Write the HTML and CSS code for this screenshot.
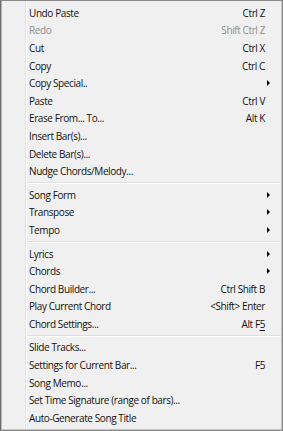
FILE: index.html
```html
<!DOCTYPE html>
<html lang="en">
<head>
    <meta charset="UTF-8">
    <meta name="viewport" content="width=device-width, initial-scale=1.0">
    <title>Edit Menu</title>
    <link rel="stylesheet" href="styles.css">
</head>
<body>
    <div class="menu">
        <div class="menu-item"><span class="label">Undo Paste</span><span class="key">Ctrl Z</span></div>
        <div class="menu-item disabled"><span class="label">Redo</span><span class="key">Shift Ctrl Z</span></div>
        <div class="menu-item"><span class="label">Cut</span><span class="key">Ctrl X</span></div>
        <div class="menu-item"><span class="label">Copy</span><span class="key">Ctrl C</span></div>
        <div class="menu-item"><span class="label">Copy Special..</span><span class="arrow"></span></div>
        <div class="menu-item"><span class="label">Paste</span><span class="key">Ctrl V</span></div>
        <div class="menu-item"><span class="label">Erase From... To...</span><span class="key">Alt K</span></div>
        <div class="menu-item"><span class="label">Insert Bar(s)...</span></div>
        <div class="menu-item"><span class="label">Delete Bar(s)...</span></div>
        <div class="menu-item"><span class="label">Nudge Chords/Melody...</span></div>

        <div class="menu-sep"></div>

        <div class="menu-item"><span class="label">Song Form</span><span class="arrow"></span></div>
        <div class="menu-item"><span class="label">Transpose</span><span class="arrow"></span></div>
        <div class="menu-item"><span class="label">Tempo</span><span class="arrow"></span></div>

        <div class="menu-sep"></div>

        <div class="menu-item"><span class="label">Lyrics</span><span class="arrow"></span></div>
        <div class="menu-item"><span class="label">Chords</span><span class="arrow"></span></div>
        <div class="menu-item"><span class="label">Chord Builder...</span><span class="key">Ctrl Shift B</span></div>
        <div class="menu-item"><span class="label">Play Current Chord</span><span class="key">&lt;Shift&gt; Enter</span></div>
        <div class="menu-item"><span class="label">Chord Settings...</span><span class="key">Alt F<u>5</u></span></div>

        <div class="menu-sep"></div>

        <div class="menu-item"><span class="label">Slide Tracks...</span></div>
        <div class="menu-item"><span class="label">Settings for Current Bar...</span><span class="key">F5</span></div>
        <div class="menu-item"><span class="label">Song Memo...</span></div>
        <div class="menu-item"><span class="label">Set Time Signature (range of bars)...</span></div>
        <div class="menu-item"><span class="label">Auto-Generate Song Title</span></div>
    </div>
</body>
</html>
```

FILE: styles.css
```css
html, body {
    margin: 0;
    padding: 0;
    background-color: #fff;
}

.menu {
    box-sizing: border-box;
    width: 283px;
    height: 431px;
    padding: 3px 0 0 0;
    border: 1px solid #8a8a8a;
    border-left-color: #6f6f6f;
    box-shadow: inset 1px 0 0 #b5b5b5, inset -1px -1px 0 #c4c4c4;
    background-color: #f0f0f0;
    /* the icon gutter: grey line with a white edge */
    background-image: linear-gradient(to right,
        transparent 24px,
        #e2e3e3 24px, #e2e3e3 25px,
        #fff 25px, #fff 26px,
        transparent 26px);
    font-family: "Open Sans", "Noto Sans", sans-serif;
    font-size: 10px;
    letter-spacing: -0.4px;
    color: #111;
}

.menu-item {
    display: flex;
    align-items: center;
    height: 17.6px;
    padding: 0 17px 0 28px;
    white-space: nowrap;
}

.menu-item .label {
    flex: 1;
}

.menu-item.disabled {
    color: #8d8d8d;
}

.arrow {
    width: 0;
    height: 0;
    margin-right: -5px;
    border-top: 3px solid transparent;
    border-bottom: 3px solid transparent;
    border-left: 3px solid #000;
}

.key u {
    text-underline-offset: 2px;
}

.menu-sep {
    height: 1px;
    margin: 2px 1px 2px 26px;
    border-bottom: 1px solid #fff;
    background-color: #e0e0e0;
}
```
